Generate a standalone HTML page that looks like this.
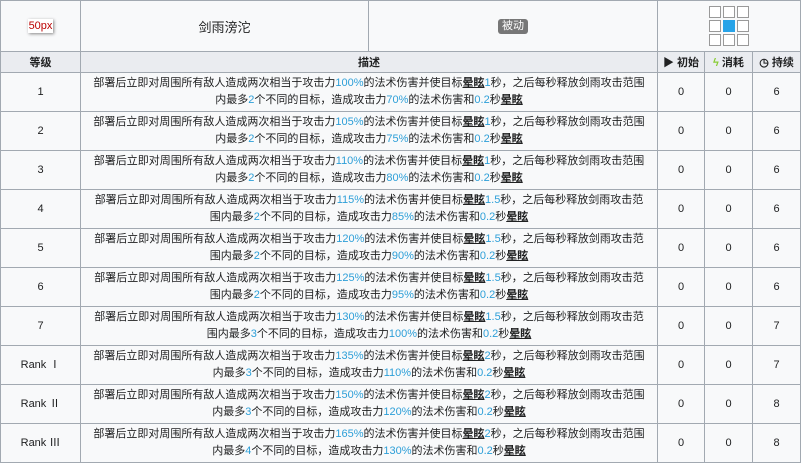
<!DOCTYPE html>
<html><head><meta charset="utf-8"><style>
body{margin:0;background:#fff;font-family:"Liberation Sans","Noto Sans CJK SC",sans-serif;font-size:11px;color:#202122}
table{border-collapse:collapse;table-layout:fixed;width:800px;position:absolute;left:0;top:0;background:#f8f9fa}
td,th{border:1px solid #a2a9b1;text-align:center;padding:0;overflow:hidden;white-space:nowrap}
th{background:#eaecf0;font-weight:bold;height:20px}
tr.r td{height:38px;line-height:17px}
.b{color:#2d9fd8}
u{font-weight:bold;text-decoration:underline}
.badge{display:inline-block;background:#777;color:#fff;border-radius:3px;padding:0 4px;line-height:15px;font-size:11px}
.g{display:inline-grid;grid-template-columns:repeat(3,12px);gap:2px}
.g span{width:10px;height:10px;border:1px solid #999;background:#fff}
.g span.c{background:#27a3e8;border-color:#27a3e8}
</style></head><body>
<table>
<colgroup><col style="width:80px"><col style="width:288px"><col style="width:289px"><col style="width:47px"><col style="width:48px"><col style="width:48px"></colgroup>
<tr style="height:51px"><td style="height:50px"><span style="color:#b00;font-size:11px;box-shadow:1px 1px 3px #888;background:#fff;padding:1px 1px">50px</span></td><td style="font-size:13px">剑雨滂沱</td><td><span class="badge">被动</span></td><td colspan="3"><div class="g"><span></span><span></span><span></span><span></span><span class="c"></span><span></span><span></span><span></span><span></span></div></td></tr>
<tr><th>等级</th><th colspan="2">描述</th><th>▶ 初始</th><th><span style="color:#8c3">ϟ</span> 消耗</th><th>◷ 持续</th></tr>
<tr class="r"><td>1</td><td colspan="2">部署后立即对周围所有敌人造成两次相当于攻击力<span class="b">100%</span>的法术伤害并使目标<u>晕眩</u><span class="b">1</span>秒，之后每秒释放剑雨攻击范围<br>内最多<span class="b">2</span>个不同的目标，造成攻击力<span class="b">70%</span>的法术伤害和<span class="b">0.2</span>秒<u>晕眩</u></td><td>0</td><td>0</td><td>6</td></tr>
<tr class="r"><td>2</td><td colspan="2">部署后立即对周围所有敌人造成两次相当于攻击力<span class="b">105%</span>的法术伤害并使目标<u>晕眩</u><span class="b">1</span>秒，之后每秒释放剑雨攻击范围<br>内最多<span class="b">2</span>个不同的目标，造成攻击力<span class="b">75%</span>的法术伤害和<span class="b">0.2</span>秒<u>晕眩</u></td><td>0</td><td>0</td><td>6</td></tr>
<tr class="r"><td>3</td><td colspan="2">部署后立即对周围所有敌人造成两次相当于攻击力<span class="b">110%</span>的法术伤害并使目标<u>晕眩</u><span class="b">1</span>秒，之后每秒释放剑雨攻击范围<br>内最多<span class="b">2</span>个不同的目标，造成攻击力<span class="b">80%</span>的法术伤害和<span class="b">0.2</span>秒<u>晕眩</u></td><td>0</td><td>0</td><td>6</td></tr>
<tr class="r"><td>4</td><td colspan="2">部署后立即对周围所有敌人造成两次相当于攻击力<span class="b">115%</span>的法术伤害并使目标<u>晕眩</u><span class="b">1.5</span>秒，之后每秒释放剑雨攻击范<br>围内最多<span class="b">2</span>个不同的目标，造成攻击力<span class="b">85%</span>的法术伤害和<span class="b">0.2</span>秒<u>晕眩</u></td><td>0</td><td>0</td><td>6</td></tr>
<tr class="r"><td>5</td><td colspan="2">部署后立即对周围所有敌人造成两次相当于攻击力<span class="b">120%</span>的法术伤害并使目标<u>晕眩</u><span class="b">1.5</span>秒，之后每秒释放剑雨攻击范<br>围内最多<span class="b">2</span>个不同的目标，造成攻击力<span class="b">90%</span>的法术伤害和<span class="b">0.2</span>秒<u>晕眩</u></td><td>0</td><td>0</td><td>6</td></tr>
<tr class="r"><td>6</td><td colspan="2">部署后立即对周围所有敌人造成两次相当于攻击力<span class="b">125%</span>的法术伤害并使目标<u>晕眩</u><span class="b">1.5</span>秒，之后每秒释放剑雨攻击范<br>围内最多<span class="b">2</span>个不同的目标，造成攻击力<span class="b">95%</span>的法术伤害和<span class="b">0.2</span>秒<u>晕眩</u></td><td>0</td><td>0</td><td>6</td></tr>
<tr class="r"><td>7</td><td colspan="2">部署后立即对周围所有敌人造成两次相当于攻击力<span class="b">130%</span>的法术伤害并使目标<u>晕眩</u><span class="b">1.5</span>秒，之后每秒释放剑雨攻击范<br>围内最多<span class="b">3</span>个不同的目标，造成攻击力<span class="b">100%</span>的法术伤害和<span class="b">0.2</span>秒<u>晕眩</u></td><td>0</td><td>0</td><td>7</td></tr>
<tr class="r"><td>Rank Ⅰ</td><td colspan="2">部署后立即对周围所有敌人造成两次相当于攻击力<span class="b">135%</span>的法术伤害并使目标<u>晕眩</u><span class="b">2</span>秒，之后每秒释放剑雨攻击范围<br>内最多<span class="b">3</span>个不同的目标，造成攻击力<span class="b">110%</span>的法术伤害和<span class="b">0.2</span>秒<u>晕眩</u></td><td>0</td><td>0</td><td>7</td></tr>
<tr class="r"><td>Rank Ⅱ</td><td colspan="2">部署后立即对周围所有敌人造成两次相当于攻击力<span class="b">150%</span>的法术伤害并使目标<u>晕眩</u><span class="b">2</span>秒，之后每秒释放剑雨攻击范围<br>内最多<span class="b">3</span>个不同的目标，造成攻击力<span class="b">120%</span>的法术伤害和<span class="b">0.2</span>秒<u>晕眩</u></td><td>0</td><td>0</td><td>8</td></tr>
<tr class="r"><td>Rank Ⅲ</td><td colspan="2">部署后立即对周围所有敌人造成两次相当于攻击力<span class="b">165%</span>的法术伤害并使目标<u>晕眩</u><span class="b">2</span>秒，之后每秒释放剑雨攻击范围<br>内最多<span class="b">4</span>个不同的目标，造成攻击力<span class="b">130%</span>的法术伤害和<span class="b">0.2</span>秒<u>晕眩</u></td><td>0</td><td>0</td><td>8</td></tr>
</table>
</body></html>
